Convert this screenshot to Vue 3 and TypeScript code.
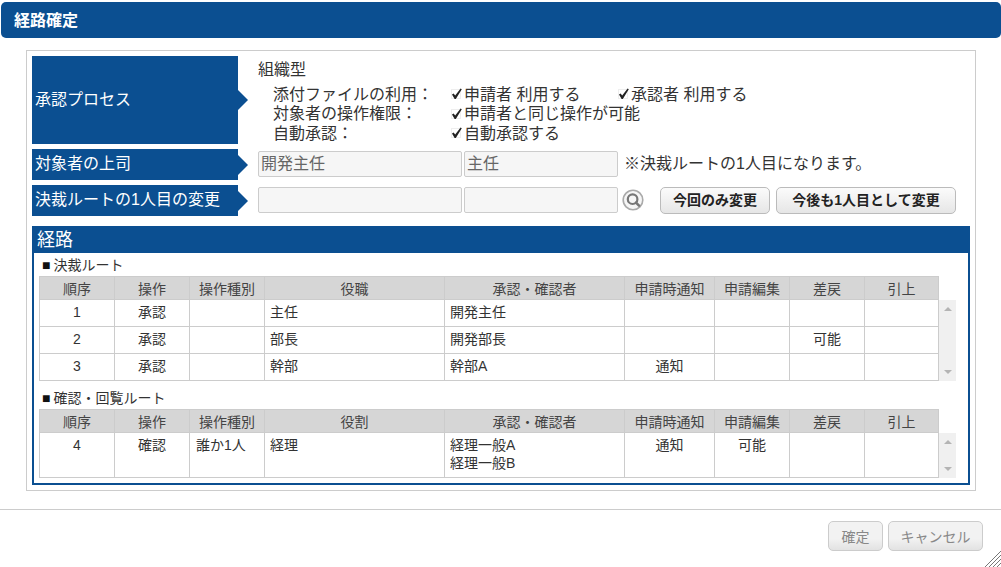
<script setup lang="ts">
interface Row {
  order: string
  op: string
  kind: string
  role: string
  people: string[]
  notify: string
  edit: string
  back: string
  pull: string
}

const widths = [75, 75, 75, 180, 180, 90, 75, 75, 74]

const processRows = [
  { label: '添付ファイルの利用：', checks: ['申請者 利用する', '承認者 利用する'] },
  { label: '対象者の操作権限：', checks: ['申請者と同じ操作が可能'] },
  { label: '自動承認：', checks: ['自動承認する'] }
]

const routeRows: Row[] = [
  { order: '1', op: '承認', kind: '', role: '主任', people: ['開発主任'], notify: '', edit: '', back: '', pull: '' },
  { order: '2', op: '承認', kind: '', role: '部長', people: ['開発部長'], notify: '', edit: '', back: '可能', pull: '' },
  { order: '3', op: '承認', kind: '', role: '幹部', people: ['幹部A'], notify: '通知', edit: '', back: '', pull: '' }
]

const confirmRows: Row[] = [
  { order: '4', op: '確認', kind: '誰か1人', role: '経理', people: ['経理一般A', '経理一般B'], notify: '通知', edit: '可能', back: '', pull: '' }
]

const sections = [
  { title: '■決裁ルート', roleHead: '役職', rows: routeRows, cls: 'sec-route' },
  { title: '■確認・回覧ルート', roleHead: '役割', rows: confirmRows, cls: 'sec-confirm' }
]
</script>

<template>
  <div class="dialog">
    <header class="title-bar">経路確定</header>

    <main class="outer">
      <div class="form-row row-process">
        <div class="label">承認プロセス</div>
        <div class="process">
          <div class="process-type">組織型</div>
          <div class="process-grid">
            <template v-for="item in processRows" :key="item.label">
              <span>{{ item.label }}</span>
              <div class="checks">
                <span v-for="c in item.checks" :key="c" class="check">
                  <svg class="tick" width="12" height="12" viewBox="0 0 12 12">
                    <rect x="0.5" y="1.5" width="9" height="9" fill="none" stroke="#ddd" stroke-width="1" stroke-dasharray="1 1" />
                    <path d="M1 6.5 L2.6 5.4 L4.2 7.6 L9.6 0.6 L10.8 1.2 L4.8 11 L3.6 11 Z" fill="#222" />
                  </svg>
                  <span>{{ c }}</span>
                </span>
              </div>
            </template>
          </div>
        </div>
      </div>

      <div class="form-row row-input">
        <div class="label">対象者の上司</div>
        <div class="inputs">
          <div class="field field-a">開発主任</div>
          <div class="field field-b">主任</div>
          <span class="note">※決裁ルートの1人目になります。</span>
        </div>
      </div>

      <div class="form-row row-input">
        <div class="label">決裁ルートの1人目の変更</div>
        <div class="inputs inputs-change">
          <div class="field field-a"></div>
          <div class="field field-b"></div>
          <svg class="search" width="22" height="22" viewBox="0 0 22 22">
            <circle cx="11" cy="11" r="9.8" fill="#f6f6f6" stroke="#aaa" stroke-width="1.6" />
            <circle cx="10.6" cy="10.2" r="4.8" fill="none" stroke="#777" stroke-width="2.2" />
            <path d="M14 13.6 L17 16.6" stroke="#777" stroke-width="2.6" stroke-linecap="round" />
          </svg>
          <button class="btn btn-once">今回のみ変更</button>
          <button class="btn btn-later">今後も1人目として変更</button>
        </div>
      </div>

      <section class="route">
        <h2 class="route-title">経路</h2>
        <div class="route-body">
          <div v-for="sec in sections" :key="sec.title" class="sec" :class="sec.cls">
            <div class="sec-title">{{ sec.title }}</div>
            <table class="grid">
              <colgroup>
                <col v-for="(w, i) in widths" :key="i" :style="{ width: w + 'px' }" />
              </colgroup>
              <thead>
                <tr>
                  <th>順序</th>
                  <th>操作</th>
                  <th>操作種別</th>
                  <th>{{ sec.roleHead }}</th>
                  <th>承認・確認者</th>
                  <th>申請時通知</th>
                  <th>申請編集</th>
                  <th>差戻</th>
                  <th>引上</th>
                </tr>
              </thead>
            </table>
            <div class="body-wrap">
              <table class="grid grid-body">
                <colgroup>
                  <col v-for="(w, i) in widths" :key="i" :style="{ width: w + 'px' }" />
                </colgroup>
                <tbody>
                  <tr v-for="row in sec.rows" :key="row.order">
                    <td class="c">{{ row.order }}</td>
                    <td class="c">{{ row.op }}</td>
                    <td class="kind">{{ row.kind }}</td>
                    <td class="l">{{ row.role }}</td>
                    <td class="l"><div v-for="p in row.people" :key="p">{{ p }}</div></td>
                    <td class="c">{{ row.notify }}</td>
                    <td class="c">{{ row.edit }}</td>
                    <td class="c">{{ row.back }}</td>
                    <td class="c">{{ row.pull }}</td>
                  </tr>
                </tbody>
              </table>
              <div class="scrollbar">
                <span class="arrow-up"></span>
                <span class="arrow-down"></span>
              </div>
            </div>
          </div>
        </div>
      </section>
    </main>

    <footer class="footer">
      <button class="btn btn-off btn-ok">確定</button>
      <button class="btn btn-off btn-cancel">キャンセル</button>
      <svg class="grip" width="16" height="18" viewBox="0 0 16 18">
        <path d="M0 18 L16 2 M4 18 L16 6 M8 18 L16 10 M12 18 L16 14" stroke="#777" stroke-width="1" fill="none" />
      </svg>
    </footer>
  </div>
</template>

<style>
html,
body {
  margin: 0;
  background: #fff;
}
</style>

<style scoped>
.dialog {
  position: relative;
  width: 1001px;
  height: 567px;
  padding-top: 2px;
  box-sizing: border-box;
  overflow: hidden;
  font-family: "Liberation Sans", "Noto Sans CJK JP", sans-serif;
  font-size: 14px;
  color: #333;
}

.title-bar {
  height: 36px;
  margin-left: 1px;
  padding-left: 13px;
  line-height: 37px;
  background: #0b4f91;
  border-radius: 5px;
  color: #fff;
  font-size: 16px;
  font-weight: bold;
}

.outer {
  width: 950px;
  height: 441px;
  margin: 12px 0 0 26px;
  padding: 5px;
  box-sizing: border-box;
  border: 1px solid #ccc;
}

.form-row {
  display: flex;
  margin-bottom: 5px;
}

.row-process {
  height: 88px;
}

.row-process .label {
  height: 88px;
  padding-bottom: 4px;
}

.row-input {
  height: 31px;
}

.row-input .label {
  height: 31px;
  padding-bottom: 6px;
}

.label {
  position: relative;
  display: flex;
  flex: none;
  align-items: center;
  width: 206px;
  padding-left: 3px;
  box-sizing: border-box;
  background: #0b4f91;
  color: #fff;
  font-size: 16px;
}

.label::after {
  content: "";
  position: absolute;
  top: 50%;
  left: 100%;
  margin-top: -10px;
  border-top: 10px solid transparent;
  border-bottom: 10px solid transparent;
  border-left: 10px solid #0b4f91;
}

.process {
  flex: 1;
  margin-left: 20px;
  font-size: 16px;
  line-height: 20px;
}

.process-type {
  height: 28.5px;
  line-height: 28px;
}

.process-grid {
  display: grid;
  grid-template-columns: 178px 1fr;
  grid-auto-rows: 19.5px;
  padding-left: 15px;
  line-height: 19.5px;
}

.checks {
  display: flex;
}

.check {
  display: flex;
  flex: none;
  align-items: center;
  width: 167px;
  white-space: nowrap;
}

.tick {
  flex: none;
  margin-right: 1px;
}

.inputs {
  display: flex;
  align-items: flex-start;
  gap: 2px;
  margin-left: 20px;
  padding-top: 2px;
}

.field {
  height: 26px;
  padding-left: 2px;
  box-sizing: border-box;
  background: #f6f6f6;
  border: 1px solid #ccc;
  border-radius: 2px;
  color: #666;
  font-size: 16px;
  line-height: 23px;
}

.field-a {
  width: 204px;
}

.field-b {
  width: 154px;
}

.note {
  margin-left: 4px;
  font-size: 16px;
  line-height: 25px;
}

.search {
  margin: 2px 0 0 2px;
}

.btn {
  height: 27px;
  padding: 0 0 3px;
  background: linear-gradient(#fbfbfb, #e6e6e6);
  border: 1px solid #bbb;
  border-radius: 5px;
  color: #222;
  font-family: inherit;
  font-size: 14px;
  font-weight: bold;
}

.btn-once {
  width: 110px;
  margin-left: 14px;
}

.btn-later {
  width: 180px;
  margin-left: 4px;
}

.route {
  width: 938px;
  margin-top: 10px;
  box-sizing: border-box;
  border: 2px solid #0b4f91;
  height: 259px;
}

.route-title {
  height: 25px;
  margin: 0;
  padding-left: 3px;
  background: #0b4f91;
  color: #fff;
  font-size: 18px;
  font-weight: normal;
  line-height: 25px;
}

.route-body {
  padding: 2px 0 0 5px;
}

.sec-title {
  height: 21px;
  padding-left: 3px;
  font-size: 14px;
  line-height: 21px;
}

.sec-title::first-letter {
  margin-right: 3px;
  color: #111;
}

.sec-confirm {
  margin-top: 7px;
}

.grid {
  width: 899px;
  table-layout: fixed;
  border-collapse: collapse;
  font-size: 14px;
}

.grid th {
  height: 22px;
  padding: 0;
  background: #d6d6d6;
  border: 1px solid #ccc;
  font-weight: normal;
  color: #444;
}

.body-wrap {
  display: flex;
  align-items: stretch;
  margin-top: -1px;
}

.grid td {
  padding: 3px 0 0;
  height: 23px;
  vertical-align: top;
  border: 1px solid #ccc;
  line-height: 18px;
}

.sec-confirm .grid td {
  height: 41px;
}

.c {
  text-align: center;
}

.grid td.l {
  padding-left: 5px;
}

.grid td.kind {
  padding-left: 6px;
}

.scrollbar {
  display: flex;
  flex: none;
  flex-direction: column;
  align-items: center;
  justify-content: space-between;
  width: 17px;
  margin-top: 1px;
  padding: 7px 0;
  box-sizing: border-box;
  background: #f0f0f0;
}

.arrow-up,
.arrow-down {
  border-left: 4px solid transparent;
  border-right: 4px solid transparent;
}

.arrow-up {
  border-bottom: 4px solid #b4b4b4;
}

.arrow-down {
  border-top: 4px solid #b4b4b4;
}

.footer {
  display: flex;
  justify-content: flex-end;
  gap: 5px;
  margin: 18px 0 0;
  padding: 11px 18px 0 0;
  height: 57px;
  box-sizing: border-box;
  border-top: 1px solid #ccc;
}

.btn-off {
  height: 30px;
  padding: 0;
  background: linear-gradient(#f2f2f2 60%, #e2e2e2);
  border-color: #ccc;
  color: #888;
  font-size: 14px;
  font-weight: normal;
}

.btn-ok {
  width: 55px;
}

.btn-cancel {
  width: 95px;
}

.grip {
  position: absolute;
  right: 0;
  bottom: 0;
}
</style>
